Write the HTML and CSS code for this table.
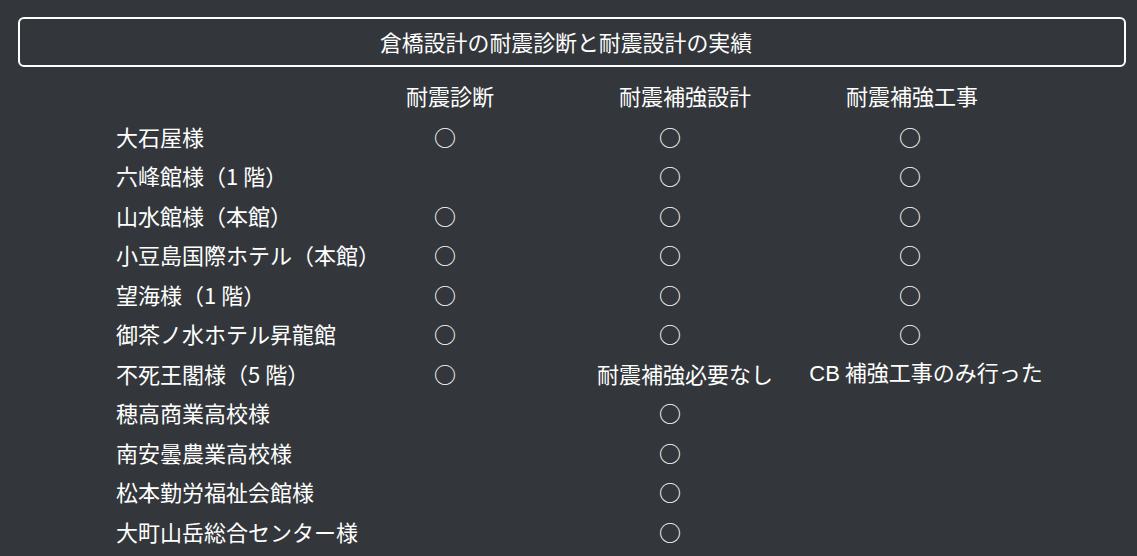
FILE: index.html
```html
<!DOCTYPE html>
<html lang="ja">
<head>
<meta charset="utf-8">
<link rel="stylesheet" href="styles.css">
</head>
<body>
<div class="title">倉橋設計の耐震診断と耐震設計の実績</div>
<div class="grid">
  <div class="cell"></div>
  <div class="cell h h1">耐震診断</div>
  <div class="cell h h2">耐震補強設計</div>
  <div class="cell h h3">耐震補強工事</div>

  <div class="name">大石屋様</div>
  <div class="cell c1">○</div>
  <div class="cell c2">○</div>
  <div class="cell c3">○</div>

  <div class="name">六峰館様（1 階）</div>
  <div class="cell c1"></div>
  <div class="cell c2">○</div>
  <div class="cell c3">○</div>

  <div class="name">山水館様（本館）</div>
  <div class="cell c1">○</div>
  <div class="cell c2">○</div>
  <div class="cell c3">○</div>

  <div class="name">小豆島国際ホテル（本館）</div>
  <div class="cell c1">○</div>
  <div class="cell c2">○</div>
  <div class="cell c3">○</div>

  <div class="name">望海様（1 階）</div>
  <div class="cell c1">○</div>
  <div class="cell c2">○</div>
  <div class="cell c3">○</div>

  <div class="name">御茶ノ水ホテル昇龍館</div>
  <div class="cell c1">○</div>
  <div class="cell c2">○</div>
  <div class="cell c3">○</div>

  <div class="name">不死王閣様（5 階）</div>
  <div class="cell c1">○</div>
  <div class="cell">耐震補強必要なし</div>
  <div class="cell"><span><span class="lat">CB</span>&nbsp;補強工事のみ行った</span></div>

  <div class="name">穂高商業高校様</div>
  <div class="cell c1"></div>
  <div class="cell c2">○</div>
  <div class="cell c3"></div>

  <div class="name">南安曇農業高校様</div>
  <div class="cell c1"></div>
  <div class="cell c2">○</div>
  <div class="cell c3"></div>

  <div class="name">松本勤労福祉会館様</div>
  <div class="cell c1"></div>
  <div class="cell c2">○</div>
  <div class="cell c3"></div>

  <div class="name">大町山岳総合センター様</div>
  <div class="cell c1"></div>
  <div class="cell c2">○</div>
  <div class="cell c3"></div>
</div>
</body>
</html>
```

FILE: styles.css
```css
html, body {
  background: #33373b;
}
body {
  margin: 17px 11px 0 18px;
  color: #ffffff;
  font-family: "Noto Sans CJK JP", "Noto Sans", sans-serif;
  overflow: hidden;
}
.title {
  height: 46px;
  padding-right: 12px;
  border: 2px solid #ffffff;
  border-radius: 6px;
  display: flex;
  align-items: center;
  justify-content: center;
  font-size: 21.9px;
  line-height: 1;
}
.grid {
  margin: 9.5px 0 0 98px;
  display: grid;
  grid-template-columns: 224px 220px 250px 232px;
  grid-auto-rows: 39.5px;
  font-size: 22px;
  line-height: 1;
}
.name {
  display: flex;
  align-items: center;
  white-space: nowrap;
}
.cell {
  display: flex;
  align-items: center;
  justify-content: center;
  white-space: nowrap;
}
.h {
  padding-bottom: 3px;
}
.lat {
  font-family: "Liberation Sans", Arial, sans-serif;
}
.h3 { padding-right: 28px; }
.c1 { padding-right: 10px; }
.c2 { padding-right: 30px; }
.c3 { padding-right: 32px; }
```
